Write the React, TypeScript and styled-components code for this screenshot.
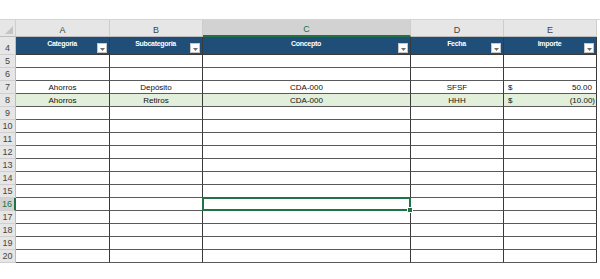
import styled, { createGlobalStyle, css } from 'styled-components';

const Columns = ['A', 'B', 'C', 'D', 'E'];
const Headers = ['Categoría', 'Subcategoría', 'Concepto', 'Fecha', 'Importe'];

type Entry = {
  cat: string;
  sub: string;
  concept: string;
  date: string;
  amount: string;
  negative?: boolean;
};

// rows 5..20, only 7 and 8 hold data
const Data: { [row: number]: Entry } = {
  7: { cat: 'Ahorros', sub: 'Depósito', concept: 'CDA-000', date: 'SFSF', amount: '50.00' },
  8: { cat: 'Ahorros', sub: 'Retiros', concept: 'CDA-000', date: 'HHH', amount: '(10.00)', negative: true },
};

const SELECTED_ROW = 16;
const SELECTED_COL = 2;

function App() {
  const rows: number[] = [];
  for (let r = 5; r <= 20; r++) rows.push(r);

  return (
    <>
      <GlobalStyle />
      <TopSpace />
      <Sheet>
        <Corner>
          <CornerMark />
        </Corner>
        {Columns.map((c, i) => (
          <ColHead key={c} $active={i === SELECTED_COL}>
            {c}
          </ColHead>
        ))}

        <RowHead $tall>4</RowHead>
        {Headers.map((h) => (
          <HeadCell key={h}>
            <span />
            <HeadLabel>{h}</HeadLabel>
            <FilterButton>
              <svg width="5" height="3" viewBox="0 0 5 3">
                <path d="M0 0 H5 L2.5 3 Z" fill="#6e6e6e" />
              </svg>
            </FilterButton>
          </HeadCell>
        ))}

        {rows.map((r) => {
          const entry = Data[r];
          const band = r === 8;
          return [
            <RowHead key={`h${r}`} $active={r === SELECTED_ROW}>
              {r}
            </RowHead>,
            <Cell key={`a${r}`} $band={band}>
              {entry?.cat}
            </Cell>,
            <Cell key={`b${r}`} $band={band}>
              {entry?.sub}
            </Cell>,
            <Cell key={`c${r}`} $band={band} $selected={r === SELECTED_ROW}>
              {entry?.concept}
            </Cell>,
            <Cell key={`d${r}`} $band={band}>
              {entry?.date}
            </Cell>,
            <AmountCell key={`e${r}`} $band={band}>
              {entry && (
                <>
                  <span>$</span>
                  <Amount $negative={entry.negative}>{entry.amount}</Amount>
                </>
              )}
            </AmountCell>,
          ];
        })}
      </Sheet>
    </>
  );
}

export default App;

/** style **/
const GlobalStyle = createGlobalStyle`
  html, body {
    margin: 0;
    padding: 0;
    background: #ffffff;
    font-family: 'Liberation Sans', Arial, sans-serif;
  }
`;

const TopSpace = styled.div`
  height: 19px;
  border-bottom: 1px solid #d4d4d4;
`;

const Sheet = styled.div`
  display: grid;
  grid-template-columns: 16px 94px 93px 208px 93px 93px;
  grid-template-rows: 17px 18px repeat(16, 13px);
  width: 597px;
`;

const Corner = styled.div`
  background: #e6e6e6;
  border-right: 1px solid #cfcfcf;
  border-bottom: 1px solid #bdbdbd;
  box-sizing: border-box;
  display: flex;
  align-items: flex-end;
  justify-content: flex-end;
  padding: 0 2px 2px 0;
`;

const CornerMark = styled.div`
  width: 0;
  height: 0;
  border-left: 8px solid transparent;
  border-bottom: 8px solid #c4c4c4;
`;

const ColHead = styled.div<{ $active?: boolean }>`
  box-sizing: border-box;
  background: ${(p) => (p.$active ? '#d2d2d2' : '#e6e6e6')};
  border-right: 1px solid #cdcdcd;
  border-bottom: ${(p) => (p.$active ? '2px solid #217346' : '1px solid #bdbdbd')};
  color: ${(p) => (p.$active ? '#217346' : '#444444')};
  font-size: 9px;
  display: flex;
  align-items: flex-end;
  justify-content: center;
  padding-bottom: 1px;
`;

const RowHead = styled.div<{ $active?: boolean; $tall?: boolean }>`
  box-sizing: border-box;
  background: ${(p) => (p.$active ? '#d2d2d2' : '#e6e6e6')};
  border-right: ${(p) => (p.$active ? '2px solid #217346' : '1px solid #bdbdbd')};
  border-bottom: 1px solid #cfcfcf;
  color: ${(p) => (p.$active ? '#217346' : '#444444')};
  font-size: 9px;
  display: flex;
  align-items: ${(p) => (p.$tall ? 'flex-end' : 'center')};
  justify-content: center;
  padding-bottom: ${(p) => (p.$tall ? '1px' : '0')};
`;

const HeadCell = styled.div`
  box-sizing: border-box;
  background: #1f4e78;
  border-right: 1px solid #3a3a3a;
  border-bottom: 1px solid #3a3a3a;
  display: grid;
  grid-template-columns: 11px 1fr 11px;
  align-items: center;
  padding-right: 1px;
`;

const HeadLabel = styled.span`
  color: #ffffff;
  font-size: 7px;
  font-weight: bold;
  letter-spacing: -0.3px;
  text-align: center;
  margin-top: -4px;
`;

const FilterButton = styled.div`
  box-sizing: border-box;
  width: 10px;
  height: 10px;
  align-self: end;
  margin-bottom: 1px;
  background: #ffffff;
  border: 1px solid #c6c6c6;
  display: flex;
  align-items: center;
  justify-content: center;
  padding-top: 2px;
`;

const cellBase = css<{ $band?: boolean }>`
  box-sizing: border-box;
  background: ${(p) => (p.$band ? '#e2efda' : '#ffffff')};
  border-right: 1px solid #3a3a3a;
  border-bottom: 1px solid #5a5a5a;
  font-size: 8px;
  color: #111111;
  white-space: nowrap;
  overflow: hidden;
`;

const Cell = styled.div<{ $band?: boolean; $selected?: boolean }>`
  ${cellBase};
  position: relative;
  display: flex;
  align-items: center;
  justify-content: center;
  overflow: visible;

  ${(p) =>
    p.$selected &&
    css`
      &::after {
        content: '';
        position: absolute;
        left: -1px;
        top: -1px;
        right: -1px;
        bottom: -1px;
        border: 2px solid #217346;
        box-sizing: border-box;
        z-index: 1;
      }
      &::before {
        content: '';
        position: absolute;
        right: -3px;
        bottom: -3px;
        width: 4px;
        height: 4px;
        background: #217346;
        border: 1px solid #ffffff;
        z-index: 2;
      }
    `}
`;

const AmountCell = styled.div<{ $band?: boolean }>`
  ${cellBase};
  display: flex;
  align-items: center;
  justify-content: space-between;
  padding: 0 1px 0 4px;
`;

const Amount = styled.span<{ $negative?: boolean }>`
  padding-right: ${(p) => (p.$negative ? '0' : '3px')};
`;
